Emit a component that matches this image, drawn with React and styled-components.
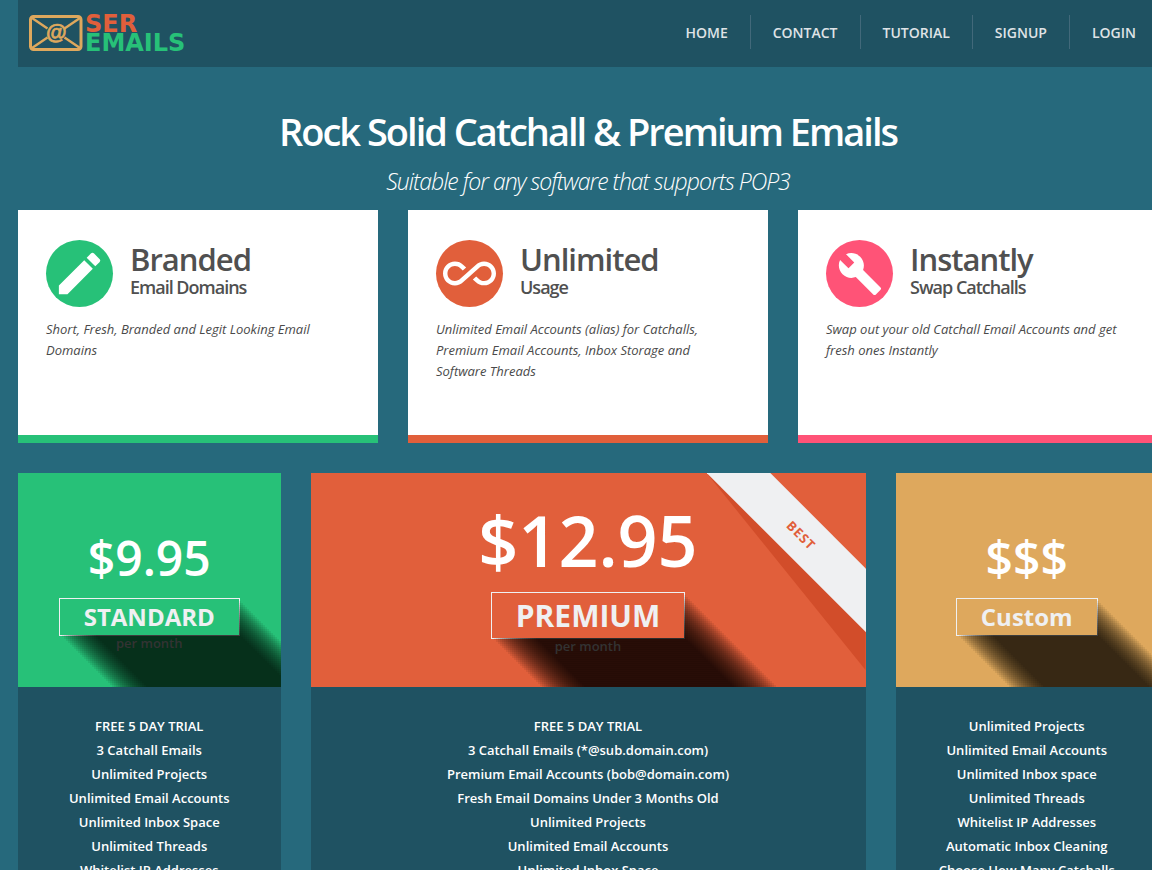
import styled, { createGlobalStyle, ThemeProvider } from "styled-components";
import { MdAllInclusive, MdBuild, MdEdit } from "react-icons/md";

const theme = {
  colors: {
    page: "#26697c",
    panel: "#1f5262",
    light: "#eff0f2",
    green: "#27c178",
    orange: "#e15f3b",
    orangeDark: "#d24d2a",
    pink: "#ff5377",
    gold: "#dea85d",
    heading: "#505050",
    text: "#4a4a4a",
  },
};

const navLinks = ["HOME", "CONTACT", "TUTORIAL", "SIGNUP", "LOGIN"];

const features = [
  {
    title: "Branded",
    subtitle: "Email Domains",
    text: "Short, Fresh, Branded and Legit Looking Email Domains",
    color: "green",
    icon: <MdEdit size={55} />,
  },
  {
    title: "Unlimited",
    subtitle: "Usage",
    text: "Unlimited Email Accounts (alias) for Catchalls, Premium Email Accounts, Inbox Storage and Software Threads",
    color: "orange",
    icon: <MdAllInclusive size={53} />,
  },
  {
    title: "Instantly",
    subtitle: "Swap Catchalls",
    text: "Swap out your old Catchall Email Accounts and get fresh ones Instantly",
    color: "pink",
    icon: <MdBuild size={46} />,
  },
];

const plans = [
  {
    name: "STANDARD",
    price: "$9.95",
    period: "per month",
    color: "green",
    items: [
      "FREE 5 DAY TRIAL",
      "3 Catchall Emails",
      "Unlimited Projects",
      "Unlimited Email Accounts",
      "Unlimited Inbox Space",
      "Unlimited Threads",
      "Whitelist IP Addresses",
    ],
  },
  {
    name: "PREMIUM",
    price: "$12.95",
    period: "per month",
    color: "orange",
    featured: true,
    items: [
      "FREE 5 DAY TRIAL",
      "3 Catchall Emails (*@sub.domain.com)",
      "Premium Email Accounts (bob@domain.com)",
      "Fresh Email Domains Under 3 Months Old",
      "Unlimited Projects",
      "Unlimited Email Accounts",
      "Unlimited Inbox Space",
    ],
  },
  {
    name: "Custom",
    price: "$$$",
    color: "gold",
    items: [
      "Unlimited Projects",
      "Unlimited Email Accounts",
      "Unlimited Inbox space",
      "Unlimited Threads",
      "Whitelist IP Addresses",
      "Automatic Inbox Cleaning",
      "Choose How Many Catchalls",
    ],
  },
];

// stacked faint shadows, two pixels apart, build the long diagonal shadow
const longShadow = Array.from({ length: 50 }, (_, i) => {
  const offset = (i + 1) * 2;
  return `${offset}px ${offset}px 0 rgba(0, 0, 0, 0.072)`;
}).join(", ");

function Logo() {
  return (
    <LogoLink href="#" aria-label="SER Emails">
      <svg width="54" height="36" viewBox="0 0 54 36" fill="none">
        <g stroke={theme.colors.gold} strokeWidth="2.4">
          <path d="M3 3 L18.5 13.5 M51 3 L35.5 13.5 M3 33 L18.5 22.5 M51 33 L35.5 22.5" />
          <rect x="1.5" y="1.5" width="50.5" height="33" rx="3" strokeWidth="3" />
        </g>
        <text
          x="27"
          y="23.5"
          textAnchor="middle"
          fontFamily="Liberation Sans, sans-serif"
          fontSize="21"
          fontStyle="italic"
          fontWeight="700"
          fill={theme.colors.gold}
          stroke={theme.colors.gold}
          strokeWidth="0.7"
        >
          @
        </text>
      </svg>
      <LogoText>
        <LogoWord $color="orange">SER</LogoWord>
        <LogoWord $color="green">EMAILS</LogoWord>
      </LogoText>
    </LogoLink>
  );
}

function FeatureCard({ feature }) {
  return (
    <Card $color={feature.color}>
      <CardHead>
        <IconCircle $color={feature.color}>{feature.icon}</IconCircle>
        <div>
          <CardTitle>{feature.title}</CardTitle>
          <CardSubtitle>{feature.subtitle}</CardSubtitle>
        </div>
      </CardHead>
      <CardText>{feature.text}</CardText>
    </Card>
  );
}

function PlanCard({ plan }) {
  return (
    <Plan $featured={plan.featured}>
      <PlanHead $color={plan.color} $featured={plan.featured}>
        {plan.featured && (
          <RibbonCorner>
            <Ribbon>BEST</Ribbon>
          </RibbonCorner>
        )}
        <Price $featured={plan.featured}>{plan.price}</Price>
        <PlanFrame>
          <PlanName $featured={plan.featured}>{plan.name}</PlanName>
        </PlanFrame>
        {plan.period && <Period>{plan.period}</Period>}
      </PlanHead>
      <PlanList>
        {plan.items.map((item) => (
          <li key={item}>{item}</li>
        ))}
      </PlanList>
    </Plan>
  );
}

function App() {
  return (
    <ThemeProvider theme={theme}>
      <GlobalStyle />
      <Container>
        <Header>
          <Logo />
          <Nav>
            {navLinks.map((link) => (
              <NavLink key={link} href="#">
                {link}
              </NavLink>
            ))}
          </Nav>
        </Header>
        <main>
          <Hero>
            <HeroTitle>Rock Solid Catchall &amp; Premium Emails</HeroTitle>
            <HeroSubtitle>Suitable for any software that supports POP3</HeroSubtitle>
          </Hero>
          <FeatureGrid>
            {features.map((feature) => (
              <FeatureCard key={feature.title} feature={feature} />
            ))}
          </FeatureGrid>
          <PlanGrid>
            {plans.map((plan) => (
              <PlanCard key={plan.name} plan={plan} />
            ))}
          </PlanGrid>
        </main>
      </Container>
    </ThemeProvider>
  );
}

export default App;

const GlobalStyle = createGlobalStyle`
  * {
    box-sizing: border-box;
  }

  body {
    margin: 0;
    overflow-x: hidden;
    background: ${({ theme }) => theme.colors.page};
    color: ${({ theme }) => theme.colors.text};
    font-family: "Open Sans", "Noto Sans", sans-serif;
    font-size: 13px;
  }

  h1, h2, h3, p, ul {
    margin: 0;
    padding: 0;
  }
`;

const Container = styled.div`
  margin: 0 -6px 0 18px;
`;

const Header = styled.header`
  display: flex;
  justify-content: space-between;
  padding: 15px 0 17px 11px;
  background: ${({ theme }) => theme.colors.panel};
`;

const LogoLink = styled.a`
  display: flex;
  gap: 2px;
  height: 35px;
  text-decoration: none;
`;

const LogoText = styled.span`
  display: flex;
  flex-direction: column;
  font-family: "DejaVu Sans", sans-serif;
  font-size: 24px;
  font-weight: 700;
  line-height: 19px;
`;

const LogoWord = styled.span`
  color: ${({ theme, $color }) => theme.colors[$color]};
`;

const Nav = styled.nav`
  display: flex;
  height: 34px;
`;

const NavLink = styled.a`
  padding: 0 22px;
  color: #dfe3e6;
  font-size: 14px;
  font-weight: 600;
  line-height: 36px;
  text-decoration: none;

  & + & {
    border-left: 1px solid #42697a;
  }
`;

const Hero = styled.section`
  padding: 40px 0 11px;
  color: #ffffff;
  text-align: center;
`;

const HeroTitle = styled.h1`
  margin-bottom: 8px;
  font-size: 38px;
  font-weight: 600;
  line-height: 48px;
  letter-spacing: -2px;
`;

const HeroSubtitle = styled.p`
  font-size: 23px;
  font-style: italic;
  font-weight: 300;
  line-height: 36px;
  letter-spacing: -1px;
`;

const FeatureGrid = styled.section`
  display: grid;
  grid-template-columns: repeat(3, 1fr);
  gap: 30px;
`;

const Card = styled.article`
  min-height: 233px;
  padding: 30px 28px;
  background: #ffffff;
  border-bottom: 8px solid ${({ theme, $color }) => theme.colors[$color]};
`;

const CardHead = styled.div`
  display: flex;
  gap: 17px;
  margin-bottom: 12px;
`;

const IconCircle = styled.span`
  display: flex;
  align-items: center;
  justify-content: center;
  width: 67px;
  height: 67px;
  border-radius: 50%;
  background: ${({ theme, $color }) => theme.colors[$color]};
  color: #ffffff;
`;

const CardTitle = styled.h2`
  color: ${({ theme }) => theme.colors.heading};
  font-size: 31px;
  font-weight: 600;
  line-height: 38px;
  letter-spacing: -1px;
`;

const CardSubtitle = styled.h3`
  color: ${({ theme }) => theme.colors.heading};
  font-size: 18px;
  font-weight: 600;
  line-height: 18px;
  letter-spacing: -1px;
`;

const CardText = styled.p`
  font-style: italic;
  line-height: 21px;
`;

const PlanGrid = styled.section`
  display: grid;
  grid-template-columns: repeat(4, 1fr);
  gap: 30px;
  margin-top: 30px;
`;

const Plan = styled.article`
  grid-column: ${({ $featured }) => ($featured ? "span 2" : "span 1")};
  background: ${({ theme }) => theme.colors.panel};
  text-align: center;
`;

const PlanHead = styled.div`
  position: relative;
  display: flex;
  flex-direction: column;
  align-items: center;
  min-height: 214px;
  padding-top: ${({ $featured }) => ($featured ? "31px" : "61px")};
  overflow: hidden;
  background: ${({ theme, $color }) => theme.colors[$color]};
`;

const Price = styled.p`
  margin-bottom: 16px;
  color: #ffffff;
  font-size: ${({ $featured }) => ($featured ? "70px" : "48px")};
  font-weight: 600;
  line-height: ${({ $featured }) => ($featured ? "72px" : "48px")};
`;

const PlanFrame = styled.div`
  border: 1px solid ${({ theme }) => theme.colors.light};
`;

const PlanName = styled.h2`
  padding: 0 24px;
  color: ${({ theme }) => theme.colors.light};
  font-size: ${({ $featured }) => ($featured ? "30px" : "24px")};
  font-weight: 700;
  line-height: 1.5;
  box-shadow: ${longShadow};
`;

const Period = styled.p`
  color: #333333;
  font-weight: 600;
  line-height: 14px;
`;

const RibbonCorner = styled.div`
  position: absolute;
  top: 0;
  right: 0;
  width: 159px;
  height: 197px;
  overflow: hidden;

  &::before {
    content: "";
    position: absolute;
    inset: 0;
    background: ${({ theme }) => theme.colors.orangeDark};
    clip-path: polygon(0 0, 100% 70%, 100% 100%);
  }
`;

const Ribbon = styled.span`
  position: absolute;
  top: 40px;
  left: -26px;
  width: 240px;
  background: ${({ theme }) => theme.colors.light};
  color: ${({ theme }) => theme.colors.orange};
  font-size: 13px;
  font-weight: 700;
  line-height: 45px;
  letter-spacing: 1px;
  transform: rotate(45deg);
`;

const PlanList = styled.ul`
  padding: 27px 0 30px;
  color: #ffffff;
  font-weight: 600;
  line-height: 24px;
  list-style: none;
`;
